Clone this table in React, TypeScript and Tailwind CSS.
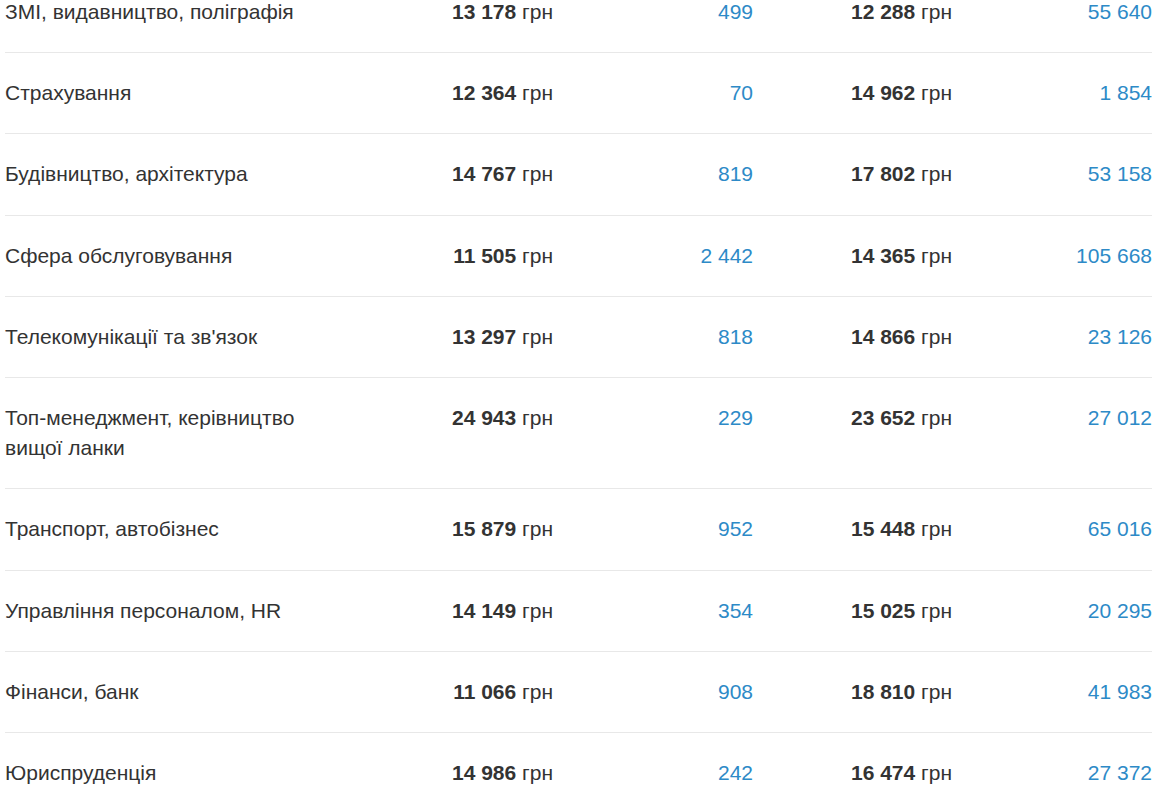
const rows: [string, string, string, string, string][] = [
  ["ЗМІ, видавництво, поліграфія", "13 178", "499", "12 288", "55 640"],
  ["Страхування", "12 364", "70", "14 962", "1 854"],
  ["Будівництво, архітектура", "14 767", "819", "17 802", "53 158"],
  ["Сфера обслуговування", "11 505", "2 442", "14 365", "105 668"],
  ["Телекомунікації та зв'язок", "13 297", "818", "14 866", "23 126"],
  ["Топ-менеджмент, керівництво вищої ланки", "24 943", "229", "23 652", "27 012"],
  ["Транспорт, автобізнес", "15 879", "952", "15 448", "65 016"],
  ["Управління персоналом, HR", "14 149", "354", "15 025", "20 295"],
  ["Фінанси, банк", "11 066", "908", "18 810", "41 983"],
  ["Юриспруденція", "14 986", "242", "16 474", "27 372"],
];

function Salary({ value }: { value: string }) {
  return (
    <div className="text-right">
      <span className="font-bold">{value}</span> грн
    </div>
  );
}

export default function App() {
  return (
    <div className="bg-white min-h-screen overflow-hidden font-['Liberation_Sans',Arial,sans-serif] text-[21px] leading-[30px] text-[#333]">
      <div className="-mt-[28.25px] ml-[5px] w-[1147px]">
        {rows.map(([name, s1, c1, s2, c2], i) => (
          <div
            key={name}
            className={`grid grid-cols-[330px_218px_200px_199px_200px] py-[25.125px] ${
              i < rows.length - 1 ? "border-b border-[#e8e8e8]" : ""
            }`}
          >
            <div>{name}</div>
            <Salary value={s1} />
            <div className="text-right text-[#2d8ac7]">{c1}</div>
            <Salary value={s2} />
            <div className="text-right text-[#2d8ac7]">{c2}</div>
          </div>
        ))}
      </div>
    </div>
  );
}
